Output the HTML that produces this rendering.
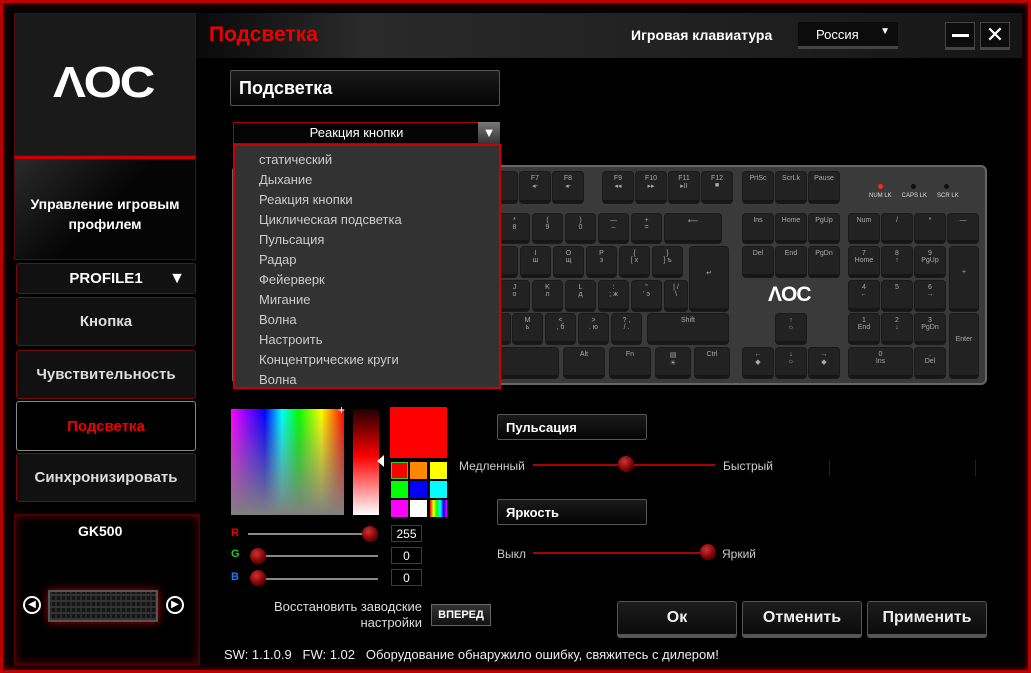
<!DOCTYPE html>
<html><head><meta charset="utf-8"><style>
*{margin:0;padding:0;box-sizing:border-box}
body{width:1031px;height:673px;background:#000;overflow:hidden;position:relative;font-family:"Liberation Sans","DejaVu Sans",sans-serif;color:#fff}
.a{position:absolute}
.frame{left:0;top:0;width:1031px;height:673px;border:3px solid #b00;box-shadow:inset 0 0 8px #700}
.lb{background:#111;border:1px solid #7a0a0a;border-radius:3px;display:flex;align-items:center;justify-content:center;font-weight:bold;font-size:15px;color:#ddd}
.k{position:absolute;background:#222;border-radius:3px;border-bottom:3px solid #161616;box-shadow:0 0 0 1px #1a1a1a;font-size:7px;color:#aaa;text-align:center;padding-top:3px}
.dd{font-size:13px;color:#ccc;line-height:20px}
.sw{position:absolute;width:17px;height:17px}
.btn{position:absolute;background:linear-gradient(#1c1c1c,#0c0c0c);border:1px solid #555;border-bottom:4px solid #555;border-radius:3px;font-weight:bold;font-size:16px;display:flex;align-items:center;justify-content:center;color:#eee}
.lab{position:absolute;background:linear-gradient(#1a1a1a,#050505);border:1px solid #555;border-radius:2px;font-weight:bold;font-size:13px;padding-left:8px;display:flex;align-items:center}
.knob{position:absolute;width:16px;height:16px;border-radius:50%;background:radial-gradient(circle at 40% 35%,#c33,#700 60%,#400)}
.box{position:absolute;border:1px solid #c00;font-size:12px;text-align:center;line-height:16px}
.t{font-size:12px;color:#ccc;position:absolute}
.logo{font-weight:bold;letter-spacing:-2px;white-space:nowrap}
</style></head><body>
<div class="a frame"></div>
<!-- header -->
<div class="a" style="left:196px;top:13px;width:826px;height:45px;background:linear-gradient(90deg,#0a0a0a,#2a2a2a 20%,#1e1e1e 70%,#151515)"></div>
<div class="a" style="left:209px;top:23px;font-size:21px;font-weight:bold;color:#e00">Подсветка</div>
<div class="a" style="left:631px;top:27px;font-size:14px;font-weight:bold">Игровая клавиатура</div>
<div class="a" style="left:798px;top:22px;width:100px;height:27px;background:#0c0c0c;border-bottom:3px solid #444;font-size:13px;padding:5px 0 0 18px">Россия <span style="position:absolute;right:8px;top:4px;font-size:10px">▼</span></div>
<div class="a" style="left:945px;top:22px;width:30px;height:28px;background:#0c0c0c;border:1px solid #444;border-bottom:3px solid #444"><div class="a" style="left:6px;top:11px;width:17px;height:3px;background:#fff"></div></div>
<div class="a" style="left:980px;top:22px;width:30px;height:28px;background:#0c0c0c;border:1px solid #444;border-bottom:3px solid #444;font-size:22px;font-weight:bold;text-align:center;line-height:24px">✕</div>
<!-- left -->
<div class="a" style="left:14px;top:13px;width:182px;height:143px;background:#1a1a1a;border:1px solid #5a0a0a"></div>
<div class="a logo" style="left:53px;top:58px;font-size:44px;transform:scaleX(1.12);transform-origin:left">ΛOC</div>
<div class="a" style="left:14px;top:156px;width:182px;height:104px;background:linear-gradient(135deg,#2a2a2a,#050505 50%);border:1px solid #5a0a0a;border-top:3px solid #c00;font-weight:bold;font-size:14px;text-align:center;padding-top:35px;line-height:20px">Управление игровым<br>профилем</div>
<div class="a lb" style="left:16px;top:263px;width:180px;height:31px;color:#fff">PROFILE1<span style="position:absolute;right:10px;font-size:16px">▼</span></div>
<div class="a lb" style="left:16px;top:297px;width:180px;height:49px">Кнопка</div>
<div class="a lb" style="left:16px;top:350px;width:180px;height:49px">Чувствительность</div>
<div class="a lb" style="left:16px;top:401px;width:180px;height:50px;border-color:#888;background:#000;color:#e00">Подсветка</div>
<div class="a lb" style="left:16px;top:453px;width:180px;height:49px">Синхронизировать</div>
<div class="a" style="left:14px;top:514px;width:186px;height:151px;border:1px solid #500;box-shadow:inset 0 0 10px #600"></div>
<div class="a" style="left:78px;top:523px;font-size:14px;font-weight:bold">GK500</div>
<div class="a" style="left:23px;top:596px;width:18px;height:18px;border:2px solid #fff;border-radius:50%;font-size:10px;text-align:center;line-height:14px">◀</div>
<div class="a" style="left:166px;top:596px;width:18px;height:18px;border:2px solid #fff;border-radius:50%;font-size:10px;text-align:center;line-height:14px">▶</div>
<div class="a" style="left:48px;top:590px;width:110px;height:32px;background:repeating-linear-gradient(0deg,#333 0 2px,transparent 2px 6px),repeating-linear-gradient(90deg,#2a2a2a 0 2px,#151515 2px 5px);border:2px solid #555;box-shadow:0 0 8px #a00"></div>
<!-- section label -->
<div class="lab" style="left:230px;top:70px;width:270px;height:36px;font-size:18px">Подсветка</div>
<div class="a" style="left:233px;top:122px;width:267px;height:22px;background:#050505;border:1px solid #a00;font-size:13px;text-align:center;line-height:20px;padding-right:20px">Реакция кнопки</div>
<div class="a" style="left:478px;top:122px;width:22px;height:22px;background:linear-gradient(#777,#333);font-size:13px;text-align:center;line-height:22px">▼</div>
<!-- keyboard -->
<div class="a" style="left:232px;top:165px;width:755px;height:220px;background:#3a3a3a;border:2px solid #666;border-radius:6px"></div>
<div class="k" style="left:488px;top:172px;width:29px;height:31px"></div>
<div class="k" style="left:520px;top:172px;width:30px;height:31px">F7<br>◂-</div>
<div class="k" style="left:553px;top:172px;width:30px;height:31px">F8<br>◂-</div>
<div class="k" style="left:603px;top:172px;width:30px;height:31px">F9<br>◂◂</div>
<div class="k" style="left:636px;top:172px;width:30px;height:31px">F10<br>▸▸</div>
<div class="k" style="left:669px;top:172px;width:30px;height:31px">F11<br>▸II</div>
<div class="k" style="left:702px;top:172px;width:30px;height:31px">F12<br>■</div>
<div class="k" style="left:743px;top:172px;width:30px;height:31px">PrtSc</div>
<div class="k" style="left:776px;top:172px;width:30px;height:31px">ScrLk</div>
<div class="k" style="left:809px;top:172px;width:30px;height:31px">Pause</div>
<div class="a" style="left:878px;top:184px;width:5px;height:5px;border-radius:50%;background:#f22"></div>
<div class="a" style="left:911px;top:184px;width:5px;height:5px;border-radius:50%;background:#111"></div>
<div class="a" style="left:944px;top:184px;width:5px;height:5px;border-radius:50%;background:#111"></div>
<div class="a" style="left:869px;top:193px;font-size:6px;color:#ddd">NUM LK &nbsp;&nbsp;&nbsp;&nbsp; CAPS LK &nbsp;&nbsp;&nbsp;&nbsp; SCR LK</div>
<!-- row2 -->
<div class="k" style="left:500px;top:214px;width:29px;height:29px">*<br>8</div>
<div class="k" style="left:533px;top:214px;width:29px;height:29px">(<br>9</div>
<div class="k" style="left:566px;top:214px;width:29px;height:29px">)<br>0</div>
<div class="k" style="left:599px;top:214px;width:29px;height:29px">—<br>–</div>
<div class="k" style="left:632px;top:214px;width:29px;height:29px">+<br>=</div>
<div class="k" style="left:665px;top:214px;width:56px;height:29px">⟵</div>
<div class="k" style="left:743px;top:214px;width:30px;height:29px">Ins</div>
<div class="k" style="left:776px;top:214px;width:30px;height:29px">Home</div>
<div class="k" style="left:809px;top:214px;width:30px;height:29px">PgUp</div>
<div class="k" style="left:849px;top:214px;width:30px;height:29px">Num</div>
<div class="k" style="left:882px;top:214px;width:30px;height:29px">/</div>
<div class="k" style="left:915px;top:214px;width:30px;height:29px">*</div>
<div class="k" style="left:948px;top:214px;width:30px;height:29px">—</div>
<!-- row3 -->
<div class="k" style="left:488px;top:247px;width:29px;height:30px"></div>
<div class="k" style="left:521px;top:247px;width:29px;height:30px">I<br>ш</div>
<div class="k" style="left:554px;top:247px;width:29px;height:30px">O<br>щ</div>
<div class="k" style="left:587px;top:247px;width:29px;height:30px">P<br>з</div>
<div class="k" style="left:620px;top:247px;width:29px;height:30px">{<br>[ х</div>
<div class="k" style="left:653px;top:247px;width:29px;height:30px">}<br>] ъ</div>
<div class="k" style="left:690px;top:247px;width:38px;height:64px;padding-top:22px">↵</div>
<div class="k" style="left:743px;top:247px;width:30px;height:30px">Del</div>
<div class="k" style="left:776px;top:247px;width:30px;height:30px">End</div>
<div class="k" style="left:809px;top:247px;width:30px;height:30px">PgDn</div>
<div class="k" style="left:849px;top:247px;width:30px;height:30px">7<br>Home</div>
<div class="k" style="left:882px;top:247px;width:30px;height:30px">8<br>↑</div>
<div class="k" style="left:915px;top:247px;width:30px;height:30px">9<br>PgUp</div>
<div class="k" style="left:950px;top:247px;width:28px;height:64px;padding-top:22px">+</div>
<!-- row4 -->
<div class="k" style="left:500px;top:281px;width:29px;height:30px">J<br>о</div>
<div class="k" style="left:533px;top:281px;width:29px;height:30px">K<br>л</div>
<div class="k" style="left:566px;top:281px;width:29px;height:30px">L<br>д</div>
<div class="k" style="left:599px;top:281px;width:29px;height:30px">:<br>; ж</div>
<div class="k" style="left:632px;top:281px;width:29px;height:30px">"<br>' э</div>
<div class="k" style="left:665px;top:281px;width:22px;height:30px">| /<br>\</div>
<div class="a logo" style="left:768px;top:283px;font-size:21px;letter-spacing:-1px">ΛOC</div>
<div class="k" style="left:849px;top:281px;width:30px;height:30px">4<br>←</div>
<div class="k" style="left:882px;top:281px;width:30px;height:30px">5</div>
<div class="k" style="left:915px;top:281px;width:30px;height:30px">6<br>→</div>
<!-- row5 -->
<div class="k" style="left:488px;top:314px;width:22px;height:30px"></div>
<div class="k" style="left:513px;top:314px;width:29px;height:30px">M<br>ь</div>
<div class="k" style="left:546px;top:314px;width:29px;height:30px">&lt;<br>, б</div>
<div class="k" style="left:579px;top:314px;width:29px;height:30px">&gt;<br>. ю</div>
<div class="k" style="left:612px;top:314px;width:29px;height:30px">? ,<br>/ .</div>
<div class="k" style="left:648px;top:314px;width:80px;height:30px">Shift</div>
<div class="k" style="left:776px;top:314px;width:30px;height:30px">↑<br>☼</div>
<div class="k" style="left:849px;top:314px;width:30px;height:30px">1<br>End</div>
<div class="k" style="left:882px;top:314px;width:30px;height:30px">2<br>↓</div>
<div class="k" style="left:915px;top:314px;width:30px;height:30px">3<br>PgDn</div>
<div class="k" style="left:950px;top:314px;width:28px;height:64px;padding-top:22px">Enter</div>
<!-- row6 -->
<div class="k" style="left:488px;top:348px;width:70px;height:30px"></div>
<div class="k" style="left:564px;top:348px;width:40px;height:30px">Alt</div>
<div class="k" style="left:610px;top:348px;width:40px;height:30px">Fn</div>
<div class="k" style="left:656px;top:348px;width:34px;height:30px">▤<br>☀</div>
<div class="k" style="left:695px;top:348px;width:34px;height:30px">Ctrl</div>
<div class="k" style="left:743px;top:348px;width:30px;height:30px">←<br>◆</div>
<div class="k" style="left:776px;top:348px;width:30px;height:30px">↓<br>☼</div>
<div class="k" style="left:809px;top:348px;width:30px;height:30px">→<br>◆</div>
<div class="k" style="left:849px;top:348px;width:63px;height:30px">0<br>Ins</div>
<div class="k" style="left:915px;top:348px;width:30px;height:30px">.<br>Del</div>
<!-- dropdown list -->
<div class="a" style="left:233px;top:144px;width:268px;height:245px;background:#323232;border:2px solid #c00;padding:4px 0 0 24px">
<div class="dd">статический</div><div class="dd">Дыхание</div><div class="dd">Реакция кнопки</div><div class="dd">Циклическая подсветка</div><div class="dd">Пульсация</div><div class="dd">Радар</div><div class="dd">Фейерверк</div><div class="dd">Мигание</div><div class="dd">Волна</div><div class="dd">Настроить</div><div class="dd">Концентрические круги</div><div class="dd">Волна</div>
</div>
<!-- color picker -->
<div class="a" style="left:231px;top:409px;width:113px;height:106px;background:linear-gradient(transparent,#808080),linear-gradient(90deg,#f0f,#00f 30%,#0ff 45%,#0f0 60%,#ff0 80%,#f00)"></div>
<div class="a" style="left:338px;top:403px;color:#fff;font-size:12px">+</div>
<div class="a" style="left:353px;top:409px;width:26px;height:106px;background:linear-gradient(#200,#f00 45%,#fff)"></div>
<div class="a" style="left:377px;top:455px;width:0;height:0;border-top:6px solid transparent;border-bottom:6px solid transparent;border-right:7px solid #fff"></div>
<div class="a" style="left:390px;top:407px;width:57px;height:51px;background:#f00"></div>
<div class="sw" style="left:391px;top:462px;background:#f00;border:1px solid #3c3"></div>
<div class="sw" style="left:410px;top:462px;background:#f80"></div>
<div class="sw" style="left:430px;top:462px;background:#ff0"></div>
<div class="sw" style="left:391px;top:481px;background:#0f0"></div>
<div class="sw" style="left:410px;top:481px;background:#00f"></div>
<div class="sw" style="left:430px;top:481px;background:#0ff"></div>
<div class="sw" style="left:391px;top:500px;background:#f0f"></div>
<div class="sw" style="left:410px;top:500px;background:#fff"></div>
<div class="sw" style="left:430px;top:500px;background:linear-gradient(90deg,#f00,#ff0,#0f0,#0ff,#00f,#f0f)"></div>
<div class="a" style="left:231px;top:527px;font-size:11px;font-weight:bold;color:#e00">R</div>
<div class="a" style="left:231px;top:548px;font-size:11px;font-weight:bold;color:#2c2">G</div>
<div class="a" style="left:231px;top:571px;font-size:11px;font-weight:bold;color:#27f">B</div>
<div class="a" style="left:248px;top:533px;width:130px;height:2px;background:#888"></div>
<div class="a" style="left:252px;top:555px;width:126px;height:2px;background:#888"></div>
<div class="a" style="left:252px;top:578px;width:126px;height:2px;background:#888"></div>
<div class="knob" style="left:362px;top:526px"></div>
<div class="knob" style="left:250px;top:548px"></div>
<div class="knob" style="left:250px;top:570px"></div>
<div class="box" style="left:391px;top:525px;width:31px;height:17px">255</div>
<div class="box" style="left:391px;top:547px;width:31px;height:17px">0</div>
<div class="box" style="left:391px;top:569px;width:31px;height:17px">0</div>
<div class="a" style="left:250px;top:599px;width:172px;text-align:right;font-size:13px;color:#ddd;line-height:16px">Восстановить заводские<br>настройки</div>
<div class="a" style="left:431px;top:604px;width:60px;height:22px;background:linear-gradient(#333,#111);border:1px solid #666;font-size:11px;font-weight:bold;text-align:center;line-height:20px">ВПЕРЕД</div>
<div class="a" style="left:224px;top:647px;font-size:13px;color:#eee">SW: 1.1.0.9 &nbsp; FW: 1.02 &nbsp; Оборудование обнаружило ошибку, свяжитесь с дилером!</div>
<!-- right controls -->
<div class="lab" style="left:497px;top:414px;width:150px;height:26px">Пульсация</div>
<div class="t" style="left:459px;top:459px">Медленный</div>
<div class="a" style="left:533px;top:464px;width:182px;height:2px;background:#a00"></div>
<div class="knob" style="left:618px;top:456px"></div>
<div class="t" style="left:723px;top:459px">Быстрый</div>
<div class="a" style="left:829px;top:460px;width:1px;height:16px;background:#222"></div>
<div class="a" style="left:975px;top:460px;width:1px;height:16px;background:#222"></div>
<div class="lab" style="left:497px;top:499px;width:150px;height:26px">Яркость</div>
<div class="t" style="left:497px;top:547px">Выкл</div>
<div class="a" style="left:533px;top:552px;width:172px;height:2px;background:#a00"></div>
<div class="knob" style="left:700px;top:544px"></div>
<div class="t" style="left:722px;top:547px">Яркий</div>
<div class="btn" style="left:617px;top:601px;width:120px;height:37px">Ок</div>
<div class="btn" style="left:742px;top:601px;width:120px;height:37px">Отменить</div>
<div class="btn" style="left:867px;top:601px;width:120px;height:37px">Применить</div>
</body></html>
